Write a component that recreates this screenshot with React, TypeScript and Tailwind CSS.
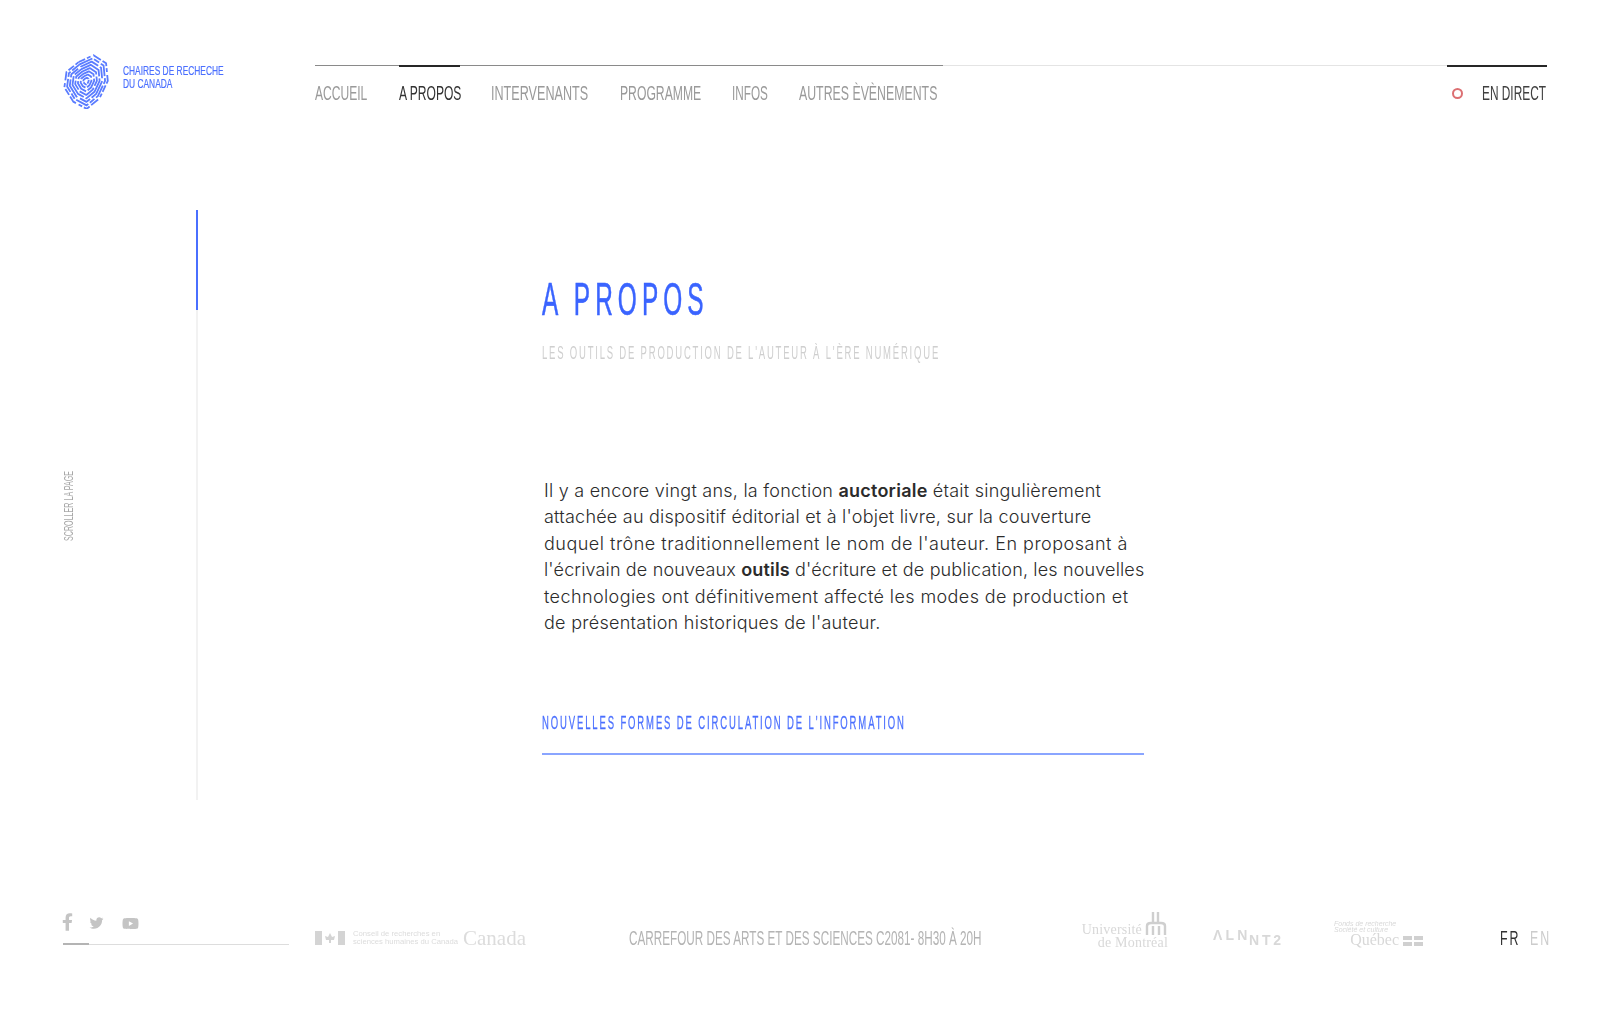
import { FaFacebookF, FaTwitter, FaYoutube } from "react-icons/fa";

const navItems = [
  { label: "ACCUEIL", box: "w-[53px]", squeeze: "scale-x-[0.575]" },
  { label: "A PROPOS", box: "w-[61px]", squeeze: "scale-x-[0.575]", active: true },
  { label: "INTERVENANTS", box: "w-[98px]", squeeze: "scale-x-[0.6]" },
  { label: "PROGRAMME", box: "w-[81px]", squeeze: "scale-x-[0.58]" },
  { label: "INFOS", box: "w-[36px]", squeeze: "scale-x-[0.56]" },
  { label: "AUTRES ÈVÈNEMENTS", box: "w-[138px]", squeeze: "scale-x-[0.587]" },
];

// contour of the fingerprint, scaled down ring after ring
const shape = [
  [-0.55, -0.62], [0.05, -1], [0.72, -0.82], [1, -0.2], [0.82, 0.5],
  [0.35, 1], [-0.35, 0.86], [-0.92, 0.42], [-1, -0.15],
];
const rings = [
  { s: 24, dash: "7 2 4 3 9 2" },
  { s: 21, dash: "14 2 6 2" },
  { s: 18, dash: "20 2 12 3" },
  { s: 15, dash: "26 2" },
  { s: 12, dash: "18 2 10 2" },
  { s: 9, dash: "14 2" },
  { s: 6, dash: "9 2" },
  { s: 3, dash: "4 1" },
];

function Fingerprint() {
  return (
    <svg width="48" height="56" viewBox="-24 -28 48 56" className="shrink-0 -ml-px blur-[0.5px]">
      <g fill="none" stroke="#5a7cff" strokeWidth="1.8" strokeLinejoin="round" transform="rotate(14)">
        {rings.map((r) => (
          <polygon
            key={r.s}
            strokeDasharray={r.dash}
            points={shape.map(([x, y]) => `${x * r.s * 0.88},${y * r.s * 1.12}`).join(" ")}
          />
        ))}
      </g>
    </svg>
  );
}

export default function App() {
  return (
    <div className="w-[1610px] h-[1010px] overflow-hidden bg-white flex flex-col [font-family:'Liberation_Sans',sans-serif]">
      {/* Header */}
      <header className="h-[210px] shrink-0 flex pt-[65px] px-[63px]">
        <div className="w-[252px] shrink-0 flex items-start -mt-[12px] gap-[13px]">
          <Fingerprint />
          <div className="mt-[12px] w-[100px] whitespace-nowrap text-[13px] leading-[12.5px] text-[#4a6fff] [-webkit-text-stroke:0.2px_#4a6fff]">
            <span className="block origin-left scale-x-[0.645]">CHAIRES DE RECHECHE</span>
            <span className="block origin-left scale-x-[0.645]">DU CANADA</span>
          </div>
        </div>
        <div className="flex-1 flex justify-between items-start border-t border-[#e4e4e4]">
          <nav className="w-[628px] -mt-px border-t border-[#8a8a8a] flex gap-[31px]">
            {navItems.map((item) => (
              <a
                key={item.label}
                href="#"
                className={`${item.box} -mt-px pt-[14px] border-t-2 whitespace-nowrap text-[21px] leading-[24px] ${
                  item.active ? "border-[#262626] text-[#333333]" : "border-transparent text-[#9a9a9a]"
                }`}
              >
                <span className={`inline-block origin-left ${item.squeeze}`}>{item.label}</span>
              </a>
            ))}
          </nav>
          <div className="w-[100px] -mt-px pt-[14px] border-t-2 border-[#262626] flex items-center">
            <span className="ml-[5px] shrink-0 w-[11px] h-[11px] rounded-full border-2 border-[#dc6f72]" />
            <span className="ml-[19px] whitespace-nowrap text-[21px] leading-[24px] text-[#404040]">
              <span className="inline-block origin-left scale-x-[0.565]">EN DIRECT</span>
            </span>
          </div>
        </div>
      </header>

      {/* Main */}
      <main className="h-[700px] shrink-0 flex pl-[63px]">
        <div className="w-[133px] shrink-0 pt-[261px]">
          <div className="h-[70px] w-[12px] whitespace-nowrap text-[12px] leading-[12px] text-[#a8a8a8] [writing-mode:vertical-rl] rotate-180">
            <span className="inline-block origin-top scale-y-[0.595]">SCROLLER LA PAGE</span>
          </div>
        </div>
        <div className="w-[2px] h-[590px] bg-[#f2f2f2]">
          <div className="h-[100px] bg-[#4a6fff]" />
        </div>
        <section className="ml-[344px] w-[602px]">
          <h1 className="mt-[66px] whitespace-nowrap text-[47px] leading-[46px] font-normal text-[#3a64ff] tracking-[9.7px] [-webkit-text-stroke:0.6px_#3a64ff]">
            <span className="inline-block origin-left scale-x-[0.52]">A PROPOS</span>
          </h1>
          <p className="mt-[20px] whitespace-nowrap text-[19px] leading-[22px] text-[#cfcfcf] tracking-[3.6px]">
            <span className="inline-block origin-left scale-x-[0.5]">LES OUTILS DE PRODUCTION DE L'AUTEUR À L'ÈRE NUMÉRIQUE</span>
          </p>
          <div className="mt-[114px] ml-[2px] whitespace-nowrap [font-family:Inter,sans-serif] font-light text-[18px] leading-[26.4px] text-[#2b2b2b]">
            <p className="tracking-[0.24px]">Il y a encore vingt ans, la fonction <b className="font-semibold">auctoriale</b> était singulièrement</p>
            <p className="tracking-[0.22px]">attachée au dispositif éditorial et à l'objet livre, sur la couverture</p>
            <p className="tracking-[0.5px]">duquel trône traditionnellement le nom de l'auteur. En proposant à</p>
            <p className="tracking-[0.15px]">l'écrivain de nouveaux <b className="font-semibold">outils</b> d'écriture et de publication, les nouvelles</p>
            <p className="tracking-[0.4px]">technologies ont définitivement affecté les modes de production et</p>
            <p className="tracking-[0.28px]">de présentation historiques de l'auteur.</p>
          </div>
          <div className="mt-[77px] pb-[20px] border-b-2 border-[#8aa5ff] whitespace-nowrap text-[19px] leading-[20px] text-[#4a6fff] tracking-[3.75px] [-webkit-text-stroke:0.3px_#4a6fff]">
            <span className="inline-block origin-left scale-x-[0.5]">NOUVELLES FORMES DE CIRCULATION DE L'INFORMATION</span>
          </div>
        </section>
      </main>

      {/* Footer */}
      <footer className="flex items-end pl-[63px] h-[36px] -mt-[1px]">
        <div className="w-[226px] shrink-0 border-b border-[#dddddd] relative h-[36px]">
          <div className="mt-[3px] flex items-center text-[#c4c4c4] h-[22px]">
            <FaFacebookF className="w-[11px] h-[18px] -ml-px -mt-[3px]" />
            <FaTwitter className="ml-[16px] w-[15px] h-[14px]" />
            <FaYoutube className="ml-[18px] w-[17px] h-[15px]" />
          </div>
          <div className="absolute left-0 -bottom-px w-[26px] h-[2px] bg-[#b4b4b4]" />
        </div>

        {/* Canada logo */}
        <div className="ml-[26px] w-[210px] shrink-0 flex items-center h-[30px] -mb-[8px] blur-[0.4px] text-[#dcdcdc]">
          <svg width="30" height="16" viewBox="0 0 30 16" className="shrink-0">
            <rect x="0" y="1" width="7" height="14" fill="#d4d4d4" />
            <rect x="23" y="1" width="7" height="14" fill="#d4d4d4" />
            <path d="M15 3 L17 7 L20 6 L19 10 L16 10 V13 H14 V10 L11 10 L10 6 L13 7 Z" fill="#d4d4d4" />
          </svg>
          <div className="ml-[8px] w-[110px] shrink-0 text-[7.7px] leading-[8px] whitespace-nowrap">
            Conseil de recherches en<br />sciences humaines du Canada
          </div>
          <span className="[font-family:'Liberation_Serif',serif] text-[21px] leading-[24px]">Canada</span>
        </div>

        <div className="ml-[104px] w-[352px] shrink-0 h-[30px] -mb-[8px] whitespace-nowrap text-[20px] leading-[30px] text-[#b4b4b4]">
          <span className="inline-block origin-left scale-x-[0.586]">CARREFOUR DES ARTS ET DES SCIENCES C2081- 8H30 À 20H</span>
        </div>

        {/* Partner logos */}
        <div className="ml-[100px] w-[87px] shrink-0 h-[36px] -mb-[4px] relative blur-[0.4px] text-[#d8d8d8] [font-family:'Liberation_Serif',serif] text-[14px] tracking-[0.2px] leading-[13px] text-right">
          <svg width="24" height="26" viewBox="0 0 24 26" className="absolute right-0 -top-[2px]">
            <path d="M9 1V12M14 1V12M3 24V15Q3 12 7 12H17Q21 12 21 15V24M9 24V15M15 24V15" fill="none" stroke="#cfcfcf" strokeWidth="2.4" />
          </svg>
          <div className="pt-[10px] pr-[26px] whitespace-nowrap">Université</div>
          <div className="whitespace-nowrap">de Montréal</div>
        </div>

        <div className="ml-[45px] w-[71px] shrink-0 h-[26px] -mb-[6px] relative blur-[0.4px] text-[#d8d8d8] font-bold text-[14px] whitespace-nowrap">
          <span className="absolute left-0 top-0 tracking-[3.2px]">ΛLN</span>
          <span className="absolute left-[36px] top-[5px] tracking-[2.8px]">NT2</span>
        </div>

        <div className="ml-[50px] w-[89px] shrink-0 h-[28px] -mb-[4px] relative blur-[0.4px] text-[#d8d8d8]">
          <div className="text-[7px] leading-[6px] italic whitespace-nowrap">Fonds de recherche<br />Société et culture</div>
          <div className="absolute right-[24px] bottom-[1px] [font-family:'Liberation_Serif',serif] text-[16px] leading-[16px]">Québec</div>
          <div className="absolute right-0 bottom-[3px] grid grid-cols-2 gap-[2px]">
            <span className="w-[9px] h-[4px] bg-[#d0d0d0]" />
            <span className="w-[9px] h-[4px] bg-[#d0d0d0]" />
            <span className="w-[9px] h-[4px] bg-[#d0d0d0]" />
            <span className="w-[9px] h-[4px] bg-[#d0d0d0]" />
          </div>
        </div>

        <div className="ml-[77px] flex gap-[12px] h-[30px] -mb-[8px] text-[20px] leading-[30px] tracking-[3px]">
          <span className="w-[18px] text-[#333333]"><span className="inline-block origin-left scale-x-[0.62]">FR</span></span>
          <span className="w-[20px] text-[#cccccc]"><span className="inline-block origin-left scale-x-[0.62]">EN</span></span>
        </div>
      </footer>
    </div>
  );
}
